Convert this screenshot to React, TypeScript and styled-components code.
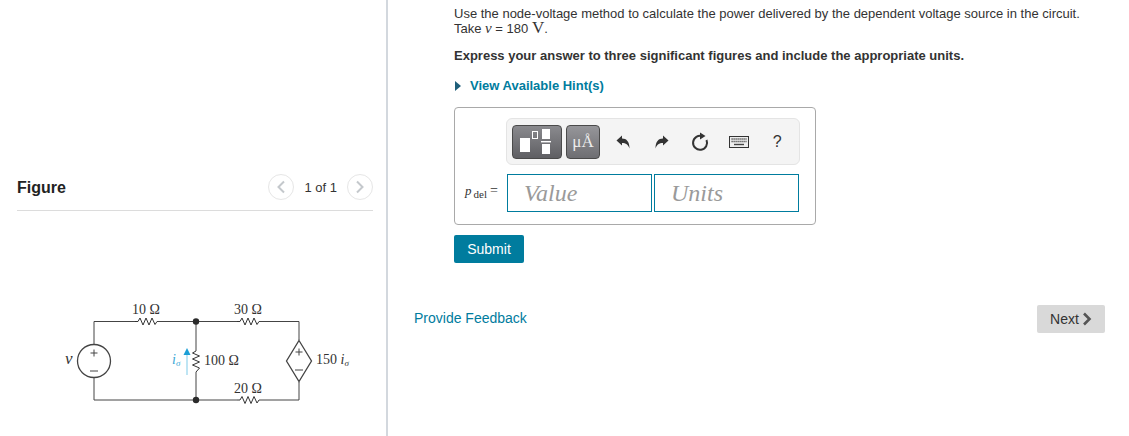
import styled, { createGlobalStyle } from "styled-components";

const GlobalStyle = createGlobalStyle`
  html, body {
    margin: 0;
    padding: 0;
    background: #fff;
    color: #333;
    font-family: "Liberation Sans", Arial, sans-serif;
  }
`;

const Page = styled.div`
  display: flex;
  width: 1129px;
  height: 436px;
  overflow: hidden;
`;

const FigurePane = styled.aside`
  box-sizing: border-box;
  width: 388px;
  height: 436px;
  padding: 177px 13px 0 17px;
  border-right: 2px solid #d3d8de;
`;

const FigureHeader = styled.div`
  display: flex;
  align-items: center;
  justify-content: space-between;
  height: 33px;
  border-bottom: 1px solid #dcdcdc;
`;

const FigureTitle = styled.h2`
  margin: 0 0 11px;
  font-size: 16px;
  line-height: 20px;
  font-weight: 700;
  color: #222;
`;

const Pager = styled.div`
  display: flex;
  align-items: center;
  gap: 10px;
  margin-bottom: 13px;
  font-size: 13px;
  color: #333;
`;

const PagerButton = styled.span`
  display: flex;
  align-items: center;
  justify-content: center;
  box-sizing: border-box;
  width: 26px;
  height: 26px;
  border: 1px solid #e6e6e6;
  border-radius: 50%;
`;

const CircuitArt = styled.svg`
  display: block;
  width: 356px;
  height: 130px;
  margin-top: 84px;
`;

const QuestionPane = styled.main`
  flex: 1;
  box-sizing: border-box;
  padding: 7px 24px 0 26px;
`;

const Question = styled.section`
  padding-left: 40px;
`;

const Prompt = styled.p`
  margin: 0;
  font-size: 13px;
  line-height: 14px;
  color: #333;
`;

const MathVar = styled.span`
  display: inline-block;
  font-family: "Liberation Serif", serif;
  font-style: italic;
  font-size: 15px;
  line-height: 14px;
`;

const MathUnit = styled.span`
  display: inline-block;
  font-family: "Liberation Serif", serif;
  font-size: 17px;
  line-height: 14px;
`;

const Instruction = styled.p`
  margin: 12px 0 0;
  font-size: 13px;
  line-height: 15px;
  font-weight: 700;
  color: #333;
`;

const HintToggle = styled.div`
  display: flex;
  align-items: center;
  gap: 9px;
  margin: 15px 0 0 1px;
  font-size: 13px;
  line-height: 15px;
  font-weight: 700;
  color: #007c9e;
`;

const HintCaret = styled.span`
  width: 0;
  height: 0;
  border-left: 6px solid #1f5f7a;
  border-top: 5px solid transparent;
  border-bottom: 5px solid transparent;
`;

const AnswerBox = styled.div`
  box-sizing: border-box;
  width: 362px;
  height: 118px;
  margin-top: 14px;
  padding: 10px 15px 0 51px;
  border: 1px solid #a9a9a9;
  border-radius: 4px;
`;

const Toolbar = styled.div`
  display: flex;
  align-items: center;
  box-sizing: border-box;
  width: 294px;
  height: 47px;
  padding-left: 5px;
  background: #f4f4f4;
  border: 1px solid #e4e4e4;
  border-radius: 6px;
`;

const ToolGroup = styled.div`
  display: flex;
  gap: 4px;
`;

const ToolButton = styled.span<{ $wide?: boolean }>`
  display: flex;
  align-items: center;
  justify-content: center;
  box-sizing: border-box;
  width: ${(p) => (p.$wide ? "50px" : "34px")};
  height: 34px;
  border: 1px solid #4a4a4a;
  border-radius: 4px;
  background: ${(p) =>
    p.$wide
      ? "linear-gradient(#8a8a8e, #5f5f63)"
      : "linear-gradient(#96969a, #6e6e72)"};
`;

const UnitGlyph = styled.span`
  font-family: "Liberation Serif", serif;
  font-size: 17px;
  color: #ececec;
`;

const ToolIcons = styled.div`
  display: flex;
  align-items: center;
  margin-left: 4px;
`;

const ToolIcon = styled.span`
  display: flex;
  align-items: center;
  justify-content: center;
  width: 38.5px;
  height: 34px;
  color: #333;
  font-size: 16px;
`;

const AnswerRow = styled.div`
  display: flex;
  align-items: center;
  margin: 9px 0 0 -42px;
`;

const AnswerLabel = styled.span`
  flex: none;
  box-sizing: border-box;
  width: 43px;
  padding: 0 0 3px 1px;
  font-family: "Liberation Serif", serif;
  font-size: 14px;
  color: #333;
  white-space: nowrap;
`;

const LabelVar = styled.i`
  font-size: 13px;
`;

const LabelSub = styled.sub`
  font-size: 11px;
  vertical-align: -3px;
  margin: 0 3px 0 2px;
`;

const InputField = styled.div`
  flex: none;
  box-sizing: border-box;
  width: 145px;
  height: 38px;
  margin-right: 2px;
  padding-left: 16px;
  border: 1px solid #007c9e;
  font-family: "Liberation Serif", serif;
  font-style: italic;
  font-size: 24px;
  line-height: 37px;
  color: #9a9a9a;
`;

const SubmitButton = styled.button`
  display: block;
  box-sizing: border-box;
  width: 70px;
  height: 28px;
  margin-top: 10px;
  padding: 0;
  border: 0;
  border-radius: 2px;
  background: #007c9e;
  color: #fff;
  font-family: inherit;
  font-size: 14px;
`;

const Footer = styled.div`
  display: flex;
  align-items: flex-start;
  justify-content: space-between;
  margin-top: 42px;
`;

const FeedbackLink = styled.a`
  margin-top: 5px;
  font-size: 14px;
  line-height: 16px;
  color: #007c9e;
`;

const NextButton = styled.button`
  display: flex;
  align-items: center;
  justify-content: center;
  gap: 3px;
  box-sizing: border-box;
  width: 68px;
  height: 28px;
  padding: 0;
  border: 0;
  border-radius: 2px;
  background: #d9d9d9;
  color: #333;
  font-family: inherit;
  font-size: 14px;
`;

const Chevron = ({
  left,
  color,
  weight = 2,
}: {
  left?: boolean;
  color: string;
  weight?: number;
}) => (
  <svg width="10" height="14" viewBox="0 0 10 14" fill="none">
    <path
      d={left ? "M8 1.5 2.5 7 8 12.5" : "M2 1.5 7.5 7 2 12.5"}
      stroke={color}
      strokeWidth={weight}
    />
  </svg>
);

const Resistor = ({ x, y }: { x: number; y: number }) => (
  <path
    transform={`translate(${x} ${y})`}
    d="M0 0 3 0 5 -3.5 8 3.5 11 -3.5 14 3.5 17 -3.5 20 3 22 0"
    fill="none"
    stroke="#333"
    strokeWidth="1"
  />
);

const Circuit = () => (
  <CircuitArt viewBox="17 295 356 130">
    <g fill="none" stroke="#444" strokeWidth="1">
      <path d="M94 344.5V321.5H135M157 321.5H237M259 321.5H299V340" />
      <path d="M94 377.5V400H237M259 400H299V382" />
      <path d="M196 321.5V351M196 372V400" />
      <circle cx="94" cy="361" r="16.5" strokeWidth="1.3" />
      <path d="M299 340.5 311.5 361 299 381.5 286.5 361Z" strokeWidth="1.3" />
      <path d="M94 349.5v7M90.5 353h7M90 371h8" />
      <path d="M299 348.5v7M295.5 352h7M295 370h8" />
    </g>
    <Resistor x={135} y={321.5} />
    <Resistor x={237} y={321.5} />
    <Resistor x={237} y={400} />
    <path
      d="M196 351 192.5 353 199.5 356 192.5 359 199.5 362 192.5 365 199.5 368 196 372"
      fill="none"
      stroke="#333"
    />
    <circle cx="196" cy="321.5" r="3.2" fill="#2b2b2b" />
    <circle cx="196" cy="400" r="3.2" fill="#2b2b2b" />
    <path d="M187 375V352" stroke="#a8dcf0" strokeWidth="1.5" />
    <path d="M187 348 190.5 355H183.5Z" fill="#1c9fd6" />
    <g fontFamily="'Liberation Serif', serif" fontSize="14" fill="#333">
      <text x="132" y="314">10 Ω</text>
      <text x="234" y="314">30 Ω</text>
      <text x="234" y="393">20 Ω</text>
      <text x="204" y="365">100 Ω</text>
      <text x="316" y="364">150 <tspan fontStyle="italic">i</tspan><tspan fontStyle="italic" fontSize="9" dy="2">σ</tspan></text>
      <text x="65" y="364" fontStyle="italic" fontSize="17">v</text>
      <text x="172" y="364" fontStyle="italic" fill="#3aa7d6">i<tspan fontSize="9" dy="2">σ</tspan></text>
    </g>
  </CircuitArt>
);

const TemplateIcon = () => (
  <svg width="40" height="28" viewBox="0 0 40 28">
    <rect x="3" y="10" width="10" height="14" fill="#fff" />
    <rect x="15.5" y="3.5" width="5" height="7" fill="none" stroke="#fff" />
    <rect x="25" y="1" width="8" height="10" fill="#fff" />
    <rect x="24" y="13" width="10" height="1.4" fill="#fff" />
    <rect x="25" y="16" width="8" height="10" fill="#fff" />
  </svg>
);

const UndoIcon = ({ flip }: { flip?: boolean }) => (
  <svg
    width="14"
    height="14"
    viewBox="0 0 14 14"
    style={flip ? { transform: "scaleX(-1)" } : undefined}
  >
    <path
      d="M0.5 5.5 6 0.5V3.5C10.5 3.5 13.5 6.5 13.5 13.5 12 9.5 10 8 6 8V10.5Z"
      fill="#333"
    />
  </svg>
);

const ResetIcon = () => (
  <svg width="18" height="20" viewBox="0 0 18 20" fill="none">
    <path d="M11.5 4.2A7 7 0 1 0 15.5 8" stroke="#333" strokeWidth="2" />
    <path d="M9 0.5 14.5 4 9 7.5Z" fill="#333" />
  </svg>
);

const KeyboardIcon = () => (
  <svg width="20" height="12" viewBox="0 0 20 12" fill="none">
    <rect x="0.5" y="0.5" width="19" height="11" stroke="#333" fill="#eee" />
    <path
      d="M2.5 3h15M2.5 5.5h15"
      stroke="#444"
      strokeWidth="1.4"
      strokeDasharray="1.2 .8"
    />
    <path d="M5 8.5h10" stroke="#444" strokeWidth="1.4" />
  </svg>
);

const App = () => {
  return (
    <>
      <GlobalStyle />
      <Page>
        <FigurePane>
          <FigureHeader>
            <FigureTitle>Figure</FigureTitle>
            <Pager>
              <PagerButton>
                <Chevron left color="#c4c8cc" />
              </PagerButton>
              <span>1 of 1</span>
              <PagerButton>
                <Chevron color="#c4c8cc" />
              </PagerButton>
            </Pager>
          </FigureHeader>
          <Circuit />
        </FigurePane>
        <QuestionPane>
          <Question>
            <Prompt>
              Use the node-voltage method to calculate the power delivered by
              the dependent voltage source in the circuit.
              <br />
              Take <MathVar>v</MathVar> = 180 <MathUnit>V</MathUnit>.
            </Prompt>
            <Instruction>
              Express your answer to three significant figures and include the
              appropriate units.
            </Instruction>
            <HintToggle>
              <HintCaret />
              View Available Hint(s)
            </HintToggle>
            <AnswerBox>
              <Toolbar>
                <ToolGroup>
                  <ToolButton $wide>
                    <TemplateIcon />
                  </ToolButton>
                  <ToolButton>
                    <UnitGlyph>μÅ</UnitGlyph>
                  </ToolButton>
                </ToolGroup>
                <ToolIcons>
                  <ToolIcon>
                    <UndoIcon />
                  </ToolIcon>
                  <ToolIcon>
                    <UndoIcon flip />
                  </ToolIcon>
                  <ToolIcon>
                    <ResetIcon />
                  </ToolIcon>
                  <ToolIcon>
                    <KeyboardIcon />
                  </ToolIcon>
                  <ToolIcon>?</ToolIcon>
                </ToolIcons>
              </Toolbar>
              <AnswerRow>
                <AnswerLabel>
                  <LabelVar>p</LabelVar>
                  <LabelSub>del</LabelSub>=
                </AnswerLabel>
                <InputField>Value</InputField>
                <InputField>Units</InputField>
              </AnswerRow>
            </AnswerBox>
            <SubmitButton>Submit</SubmitButton>
          </Question>
          <Footer>
            <FeedbackLink>Provide Feedback</FeedbackLink>
            <NextButton>
              Next
              <Chevron color="#555" weight={2.6} />
            </NextButton>
          </Footer>
        </QuestionPane>
      </Page>
    </>
  );
};

export default App;
